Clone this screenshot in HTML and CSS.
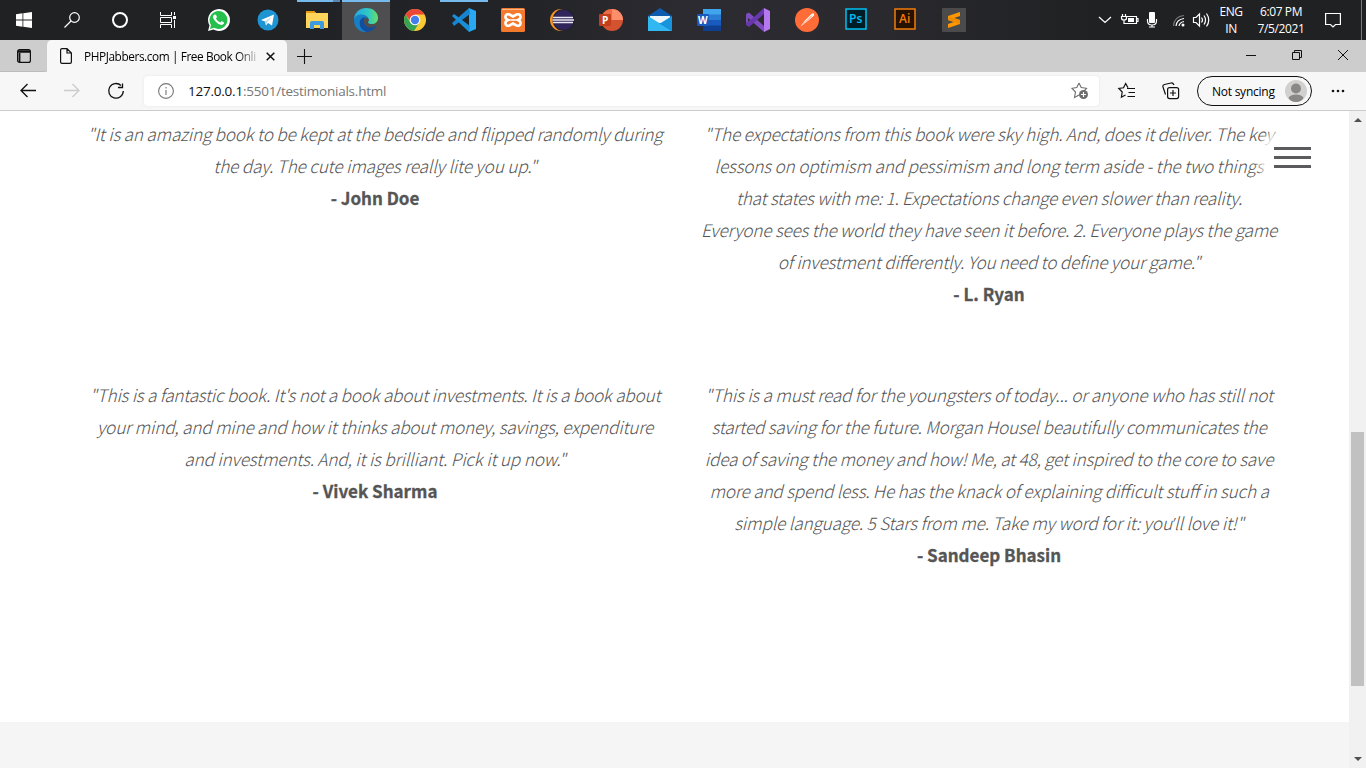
FILE: index.html
```html
<!DOCTYPE html>
<html lang="en">
<head>
<meta charset="utf-8">
<title>PHPJabbers.com | Free Book Online</title>
<link rel="stylesheet" href="styles.css">
</head>
<body>
<header class="taskbar">
  <div class="system">
    <div class="task"><svg width="16" height="16" viewBox="0 0 16 16" fill="#fff"><path d="M0 2.2 6.5 1.3V7.6H0zM7.3 1.2 16 0V7.6H7.3zM0 8.4H6.5V14.7L0 13.8zM7.3 8.4H16V16L7.3 14.8z"/></svg></div>
    <div class="task"><svg width="16" height="16" viewBox="0 0 16 16" fill="none" stroke="#fff" stroke-width="1.2"><circle cx="10.5" cy="5.5" r="4.8"/><path d="M7 9 .5 15.5"/></svg></div>
    <div class="task"><svg width="18" height="18" viewBox="0 0 18 18" fill="none" stroke="#fff" stroke-width="2"><circle cx="9" cy="9" r="7"/></svg></div>
    <div class="task"><svg width="16" height="16" viewBox="0 0 16 16" fill="none" stroke="#fff"><path d="M.5 0V3.5H11.5V0M.5 16V12.5H11.5V16M.5 5.5H11.5V10.5H.5zM14.500 0V3M14.500 8V16"/><path d="M13 4h3v3h-3z" fill="#fff" stroke="none"/></svg></div>
  </div>
  <div class="apps">
    <div class="task"><svg width="24" height="24" viewBox="1 0 24 24"><path d="M2 23 3.500 17.500A11 11 0 1 1 7.500 21.500z" fill="#fff"/><path d="M4 21 5 17A9 9 0 1 1 8 19.800z" fill="#25c04b"/><path d="M8.500 6.500 7 8Q6.500 10.500 10 14T16 17L18 15.500V14.500L15.500 13 14.300 14.500Q11.500 13.500 9.900 10.500L11 9.300 10 6.700z" fill="#fff"/></svg></div>
    <div class="task"><svg width="22" height="22" viewBox="0 0 22 22"><circle cx="11" cy="11" r="10.500" fill="#1f94d2"/><path d="M4 11 17 5.500 15 16.500 11 14 9 16.500 8 12.500z" fill="#fff"/><path d="M8 12.500 15 7.500 10 13.300 9 16.500z" fill="#b9d5e8"/></svg></div>
    <div class="task running folder"><svg width="22" height="20" viewBox="0 0 22 20"><path d="M0 1H8L10 3H22V18H0z" fill="#ffd45b"/><path d="M0 1H8L10 3H0z" fill="#e59c13"/><path d="M4 19V13Q4 11 6 11H16Q18 11 18 13V19H14V15H8V19z" fill="#3c9be0"/></svg></div>
    <div class="task running active"><svg width="24" height="24" viewBox="0 0 24 24"><defs><linearGradient id="edge"><stop stop-color="#24a6dd"/><stop offset=".6" stop-color="#31c8c5"/><stop offset="1" stop-color="#67de65"/></linearGradient></defs><path d="M0 12C0 4 6 0 12 0C20 0 24 5 24 10C24 14 21 16 18 16Q14 16 14 14Q16 12 14 10C11 5 2 7 0 12z" fill="url(#edge)"/><path d="M0 12C2 5 11 5 14 10C8 8 5 22 14 24C6 25 0 20 0 12z" fill="#1680c7"/><path d="M12 9C3 9 4 22 13 24Q20 23 22 18Q13 22 10 15Q9 11 12 9z" fill="#124e9e"/></svg></div>
    <div class="task"><svg width="22" height="22" viewBox="0 0 22 22"><circle cx="11" cy="11" r="11" fill="#fbc934"/><path d="M1.500 5.500A11 11 0 0 1 20.500 5.500H11L7 13z" fill="#ea4738"/><path d="M1.500 5.500A11 11 0 0 0 10 22L15 14 11 16 6.500 14z" fill="#34a353"/><circle cx="11" cy="11" r="5.300" fill="#fff"/><circle cx="11" cy="11" r="4.200" fill="#427fed"/></svg></div>
    <div class="task running"><svg width="24" height="24" viewBox="0 0 24 24"><path d="M17 0 24 3V21L17 24z" fill="#29a9f2"/><path d="M17 0 0 15 2 18 18 6z" fill="#1684cf"/><path d="M2 6 0 8 17 24 18 18z" fill="#1b8ed8"/></svg></div>
    <div class="task"><svg width="24" height="24" viewBox="0 0 24 24"><rect width="24" height="24" rx="1.500" fill="#f3792c"/><path d="M1 1.500H23" stroke="#f9b58a"/><path d="M8.500 6.500C4 5 3 10.500 7 12C3 13.500 4 19 8.500 17.500L12 15.500 15.500 17.500C20 19 21 13.500 17 12C21 10.500 20 5 15.500 6.500L12 8.500z" fill="none" stroke="#fff" stroke-width="2.600"/><path d="M9.500 12H14.500" stroke="#fff" stroke-width="1.600"/></svg></div>
    <div class="task"><svg width="24" height="24" viewBox="0 0 24 24"><circle cx="11" cy="12" r="11" fill="#f79425"/><circle cx="13.500" cy="12" r="11" fill="#222032"/><circle cx="13.500" cy="12" r="10" fill="#30265b"/><path d="M3 9.500H23M2.500 12H24M3 14.500H23" stroke="#e9e7ef" stroke-width="1.500"/></svg></div>
    <div class="task"><svg width="24" height="24" viewBox="0 0 24 24"><circle cx="13" cy="12" r="11" fill="#d35230"/><path d="M13 1A11 11 0 0 1 24 12H13z" fill="#ff8f6b"/><path d="M13 1A11 11 0 0 0 2 12H13z" fill="#ed6c47"/><rect y="6" width="12" height="12" rx="1" fill="#c43e1c"/><text x="3" y="15.500" class="letter">P</text></svg></div>
    <div class="task"><svg width="24" height="24" viewBox="0 0 24 24"><path d="M0 8 12 0 24 8V23H0z" fill="#0f5caf"/><path d="M2 8H22V15H2z" fill="#eff6fa"/><path d="M0 8 24 23H0z" fill="#31b7f1"/><path d="M24 8V23L12 15.500z" fill="#1794de"/></svg></div>
    <div class="task"><svg width="24" height="24" viewBox="0 0 24 24"><path d="M6 1H24V7H6z" fill="#41a5ee"/><path d="M6 6.500H24V12H6z" fill="#2b7cd3"/><path d="M6 12H24V18H6z" fill="#185abd"/><path d="M6 17.500H24V23H6z" fill="#103f91"/><rect y="6" width="12" height="12" rx="1" fill="#185abd"/><text x="1" y="15.500" class="letter">W</text></svg></div>
    <div class="task"><svg width="24" height="24" viewBox="0 0 24 24"><path d="M0 6 3 4.500 18 18V24L2 10V15L0 17z" fill="#7e4cc0"/><path d="M0 17 3 19 18 6V0L8 9 0 15z" fill="#6737ac"/><path d="M18 0 24 3V21L18 24z" fill="#b578ee"/></svg></div>
    <div class="task"><svg width="24" height="24" viewBox="0 0 24 24"><circle cx="12" cy="12" r="12" fill="#ff6c37"/><path d="M5.500 18.500 10 12.500 17 5.500 19 5.500V7.500L11 14.500z" fill="#fff"/><path d="M8 16.500 17 7.500" stroke="#ff6c37" stroke-width=".8"/></svg></div>
    <div class="task"><svg width="22" height="22" viewBox="0 0 22 22"><rect x="1" y="0" width="20" height="20" fill="#001d26" stroke="#00c1f3" stroke-width="1.500"/><text x="4" y="14" class="adobe ps">Ps</text></svg></div>
    <div class="task"><svg width="22" height="22" viewBox="0 0 22 22"><rect x="1" y="0" width="20" height="20" fill="#251200" stroke="#f37b0b" stroke-width="1.500"/><text x="5" y="14" class="adobe ai">Ai</text></svg></div>
    <div class="task"><svg width="24" height="24" viewBox="0 0 24 24"><rect width="24" height="24" rx="1" fill="#4b4b4b"/><path d="M6 8 18 4V8L12 10 18 12V16L6 20V16L12 14 6 12z" fill="#ff9800"/><path d="M12 10 18 12V16L6 12V9z" fill="#f08c00"/></svg></div>
  </div>
  <div class="tray">
    <svg width="112" height="24" viewBox="0 0 112 24" fill="none" stroke="#fff" stroke-width="1.200"><path d="M1 9 7 14.500 13 9M28 8.500H38.500V15.500H27M38.500 10.500H40V13.500H38.500M24.500 6V8M27.500 6V8M23.500 8.500H28.500V10Q28.500 12 26 12T23.500 10zM26 12V15.500H28"/><path d="M30 10H36V14H30z" fill="#fff" stroke="none"/><rect x="51" y="4" width="6" height="11" rx="1" fill="#fff" stroke="none"/><path d="M49.500 11V13Q49.500 17 54 17T58.500 13V11M54 17V19M51 19H57"/><path d="M75.500 18Q76 8.500 86 7.500" stroke="#777"/><path d="M78 18Q78.500 11.500 86 10.500M81 18Q81.500 14.500 86 13.500"/><circle cx="85" cy="17" r="1.500" fill="#fff" stroke="none"/><path d="M95.500 9.500H98L101.500 6V18L98 14.500H95.500zM103.500 9.500Q105.500 12 103.500 14.500M106 7.500Q109 12 106 16.500M108.500 5.500Q113 12 108.500 18.500"/></svg>
    <div class="tray-text lang">ENG<br>IN</div>
    <div class="tray-text clock">6:07 PM<br>7/5/2021</div>
    <svg class="notice" width="16" height="17" viewBox="0 0 16 17" fill="none" stroke="#fff" stroke-width="1.200"><path d="M.6 1.500H15.400V12.500H10.500L8 15 5.500 12.500H.6z"/></svg>
    <span class="peek"></span>
  </div>
</header>

<div class="tabbar">
  <div class="workspace"><svg width="14" height="14" viewBox="0 0 14 14" fill="none" stroke="#111" stroke-width="1.200"><rect x=".6" y=".6" width="12.800" height="12.800" rx="2"/><path d="M1 2.500H13" stroke-width="2.500"/><path d="M2.500 4V13" stroke-width="1.800"/></svg></div>
  <div class="tab">
    <svg width="12" height="16" viewBox="0 0 12 16" fill="none" stroke="#111" stroke-width="1.200"><path d="M2 .6H7L11.400 5V14Q11.400 15.400 10 15.400H2Q.6 15.400.6 14V2Q.6.6 2 .6zM7 .6V5H11.400"/></svg>
    <span class="tab-title">PHPJabbers.com | Free Book Onli</span>
    <svg class="tab-close" width="9" height="9" viewBox="0 0 9 9" stroke="#111" stroke-width="1.500"><path d="M.7.7 8.300 8.300M8.300.7.7 8.300"/></svg>
  </div>
  <svg class="new-tab" width="15" height="15" viewBox="0 0 15 15" stroke="#111" stroke-width="1.100"><path d="M0 7.500H15M7.500 0V15"/></svg>
  <svg class="window-controls" width="104" height="12" viewBox="0 0 104 12" fill="none" stroke="#111"><path d="M0 6.500H10M46.500 3.500H53.500V10.500H46.500zM48.500 3.500V1.500H55.500V8.500H53.500M92 1 102 11M102 1 92 11"/></svg>
</div>

<div class="toolbar">
  <svg class="navigation" width="106" height="18" viewBox="0 0 106 18" fill="none" stroke="#111" stroke-width="1.300"><path d="M16 8.500H1M7.500 2 1 8.500 7.500 15"/><path d="M44 8.500H59M52.500 2 59 8.500 52.500 15" stroke="#ccc"/><path d="M101 3.500A7.300 7.300 0 1 0 103.300 9M102.500 1.500V5.500H98"/></svg>
  <div class="address">
    <svg width="16" height="16" viewBox="0 0 16 16" fill="none" stroke="#767676" stroke-width="1.100"><circle cx="8" cy="8" r="7.400"/><path d="M8 7V12M8 4V5.500"/></svg>
    <span class="url"><b>127.0.0.1</b>:5501/testimonials.html</span>
    <svg class="favorite" width="18" height="18" viewBox="0 0 18 18" fill="none" stroke="#6d6d6d" stroke-width="1.100"><path d="M8 1 10.200 5.500 15.500 6.300 12 10M8 1 5.800 5.500 1 6.300 4.500 10 3.500 15.500 8 13"/><circle cx="12.500" cy="12.500" r="4.500" fill="#6d6d6d" stroke="none"/><path d="M10 12.500H15M12.500 10V15" stroke="#fff"/></svg>
  </div>
  <svg class="collections" width="62" height="18" viewBox="0 0 62 18" fill="none" stroke="#111" stroke-width="1.200"><path d="M10 5.800 7.700 1.500 5.500 5.800.8 6.500 4.200 10 3.400 15.200 7.500 13M9 6.500H17M10.500 10.500H17M9.500 14.500H17"/><rect x="49.600" y="5.600" width="11" height="11" rx="2"/><path d="M55 8V14M52 11H58M47.500 12.500 45 5Q44.500 3 46.500 2.500L53 1Q55 .7 56 3"/></svg>
  <div class="profile"><span>Not syncing</span><svg width="22" height="22" viewBox="0 0 22 22"><circle cx="11" cy="11" r="11" fill="#d2d0ce"/><circle cx="11" cy="8.500" r="5" fill="#8a8886"/><path d="M3.500 18Q5 14.500 11 14.500T18.500 18Q16 22 11 22T3.500 18z" fill="#8a8886"/></svg></div>
  <svg class="more" width="14" height="4" viewBox="0 0 14 4" fill="#111"><circle cx="2" cy="2" r="1.300"/><circle cx="7" cy="2" r="1.300"/><circle cx="12" cy="2" r="1.300"/></svg>
</div>

<div class="viewport">
  <div class="page">
    <main class="testimonials">
      <blockquote><p><i class="a1">"It is an amazing book to be kept at the bedside and flipped randomly during</i><i class="a2">the day. The cute images really lite you up."</i></p><strong>- John Doe</strong></blockquote>
      <blockquote><p><i class="b1">"The expectations from this book were sky high. And, does it deliver. The key</i><i class="b2">lessons on optimism and pessimism and long term aside - the two things</i><i class="b3">that states with me: 1. Expectations change even slower than reality.</i><i class="b4">Everyone sees the world they have seen it before. 2. Everyone plays the game</i><i class="b5">of investment differently. You need to define your game."</i></p><strong>- L. Ryan</strong></blockquote>
      <blockquote><p><i class="c1">"This is a fantastic book. It's not a book about investments. It is a book about</i><i class="c2">your mind, and mine and how it thinks about money, savings, expenditure</i><i class="c3">and investments. And, it is brilliant. Pick it up now."</i></p><strong>- Vivek Sharma</strong></blockquote>
      <blockquote><p><i class="d1">"This is a must read for the youngsters of today... or anyone who has still not</i><i class="d2">started saving for the future. Morgan Housel beautifully communicates the</i><i class="d3">idea of saving the money and how! Me, at 48, get inspired to the core to save</i><i class="d4">more and spend less. He has the knack of explaining difficult stuff in such a</i><i class="d5">simple language. 5 Stars from me. Take my word for it: you<span class="apostrophe">’</span>ll love it!"</i></p><strong>- Sandeep Bhasin</strong></blockquote>
    </main>
    <footer class="footer"></footer>
    <div class="menu-button"><span></span><span></span><span></span></div>
  </div>
  <div class="scrollbar"><span class="arrow up"></span><span class="thumb"></span><span class="arrow down"></span></div>
</div>
</body>
</html>
```
FILE: styles.css
```css
* { box-sizing: border-box; }
body { margin: 0; width: 1366px; height: 768px; overflow: hidden; display: flex; flex-direction: column; background: #fff; font-family: "Open Sans", "Noto Sans", sans-serif; font-size: 12px; }
svg { display: block; flex: none; overflow: visible; }

.taskbar { height: 40px; flex: none; display: flex; background: linear-gradient(90deg, #202122, #222327 38%, #2c2b31 50%, #29292e 65%, #202123 80%); }
.system { display: flex; }
.apps { display: flex; gap: 1px; margin-left: 3px; }
.task { width: 48px; height: 40px; display: flex; align-items: center; justify-content: center; }
.running { border-top: 2px solid #76b9ed; padding-bottom: 2px; }
.folder { width: 46px; margin-left: 1px; margin-right: 1px; border-image: linear-gradient(90deg, transparent 7%, #76b9ed 7% 85%, #5a86ad 85%) 2 0 0; }
.active { background: #4e4e50; }
.letter { font: bold 10px "Open Sans", sans-serif; fill: #fff; }
.adobe { font: 600 12px "Open Sans", sans-serif; }
.ps { fill: #00c1f3; }
.ai { fill: #f37b0b; }
.tray { margin-left: auto; display: flex; align-items: center; color: #fff; padding-right: 4px; }
.tray-text { text-align: center; line-height: 17px; margin-top: -1px; white-space: nowrap; }
.lang { width: 24px; margin-left: 9px; font-size: 12px; letter-spacing: -.4px; }
.clock { width: 60px; margin-left: 8px; font-size: 12px; letter-spacing: -.4px; }
.notice { margin-left: 14px; }
.peek { width: 1px; height: 40px; margin-left: 20px; background: #77787a; }

.tabbar { height: 32px; flex: none; background: #cdcdcd; display: flex; align-items: center; }
.workspace { width: 47px; height: 32px; padding-left: 17px; display: flex; align-items: center; border-bottom: 1px solid #bbb; border-radius: 0 0 4px; }
.tab { width: 240px; height: 32px; background: #f7f7f7; border-radius: 5px 5px 0 0; display: flex; align-items: center; padding-left: 13px; }
.tab-title { width: 174px; margin-left: 12px; white-space: nowrap; font-size: 11.8px; letter-spacing: -.4px; -webkit-mask-image: linear-gradient(90deg, #000 88%, rgba(0,0,0,.15)); }
.tab-close { margin-left: 8px; }
.new-tab { margin-left: 10px; }
.window-controls { margin-left: auto; margin-right: 16px; margin-bottom: 4px; }

.toolbar { height: 39px; flex: none; background: #f7f7f7; border-bottom: 1px solid #ccc; display: flex; align-items: center; }
.navigation { margin-left: 20px; }
.address { width: 955px; height: 30px; margin-left: 18px; background: #fff; border-radius: 4px; box-shadow: 0 0 3px #e4e4e4; display: flex; align-items: center; padding: 0 10px 0 14px; }
.url { margin-left: 14px; font-size: 13.5px; letter-spacing: -.23px; color: #777; }
.url b { font-weight: 400; color: #111; }
.favorite { margin-left: auto; }
.collections { margin-left: 19px; }
.profile { width: 115px; height: 30px; border: 1px solid #111; border-radius: 15px; margin-left: 17px; display: flex; align-items: center; justify-content: space-between; padding: 0 4px 0 14px; letter-spacing: -.25px; }
.more { margin-left: 19px; }
.window-controls { margin-bottom: 0; margin-top: -3px; }

.viewport { flex: 1; min-height: 0; display: flex; }
.page { width: 1349px; position: relative; display: flex; flex-direction: column; color: #555; }
.testimonials { height: 611px; display: grid; grid-template-columns: 614px 614px; grid-template-rows: 261px 1fr; padding: 7px 0 0 68px; font: 17.3px/32px "Noto Sans CJK SC", "Open Sans", sans-serif; text-align: center; }
blockquote { margin: 0; }
p { margin: 0; font-weight: 300; white-space: nowrap; font-feature-settings: "liga" 1; }
p i { display: block; letter-spacing: -.25px; }
.a2, .b2, .c3 { letter-spacing: -.22px; }
.b3, .b5, .c1 { letter-spacing: -.27px; }
.b4 { letter-spacing: -.26px; }
.d1 { letter-spacing: -.235px; }
.d5 { letter-spacing: -.22px; }
.apostrophe { font-family: "Open Sans", sans-serif; line-height: 1; }
strong { display: block; font-weight: 700; font-size: 17px; -webkit-text-stroke: .3px #555; }
.footer { flex: 1; background: #f5f5f5; }
.menu-button { position: absolute; top: 13px; right: 17px; width: 80px; height: 66px; padding: 23px 21px 0 22px; display: flex; flex-direction: column; gap: 6px; background: radial-gradient(closest-side, #fff 40%, rgba(255,255,255,.75) 75%, rgba(255,255,255,0)); }
.menu-button span { height: 3px; background: #5b5b5d; }
.scrollbar { width: 17px; background: #f1f1f1; display: flex; flex-direction: column; align-items: center; padding: 7px 0; }
.arrow { border: 4px solid transparent; }
.up { border-top: 0; border-bottom-color: #505050; }
.down { border-bottom: 0; border-top-color: #505050; margin-top: auto; }
.thumb { width: 13px; height: 254px; margin-top: 310px; background: #c1c1c1; }
```
